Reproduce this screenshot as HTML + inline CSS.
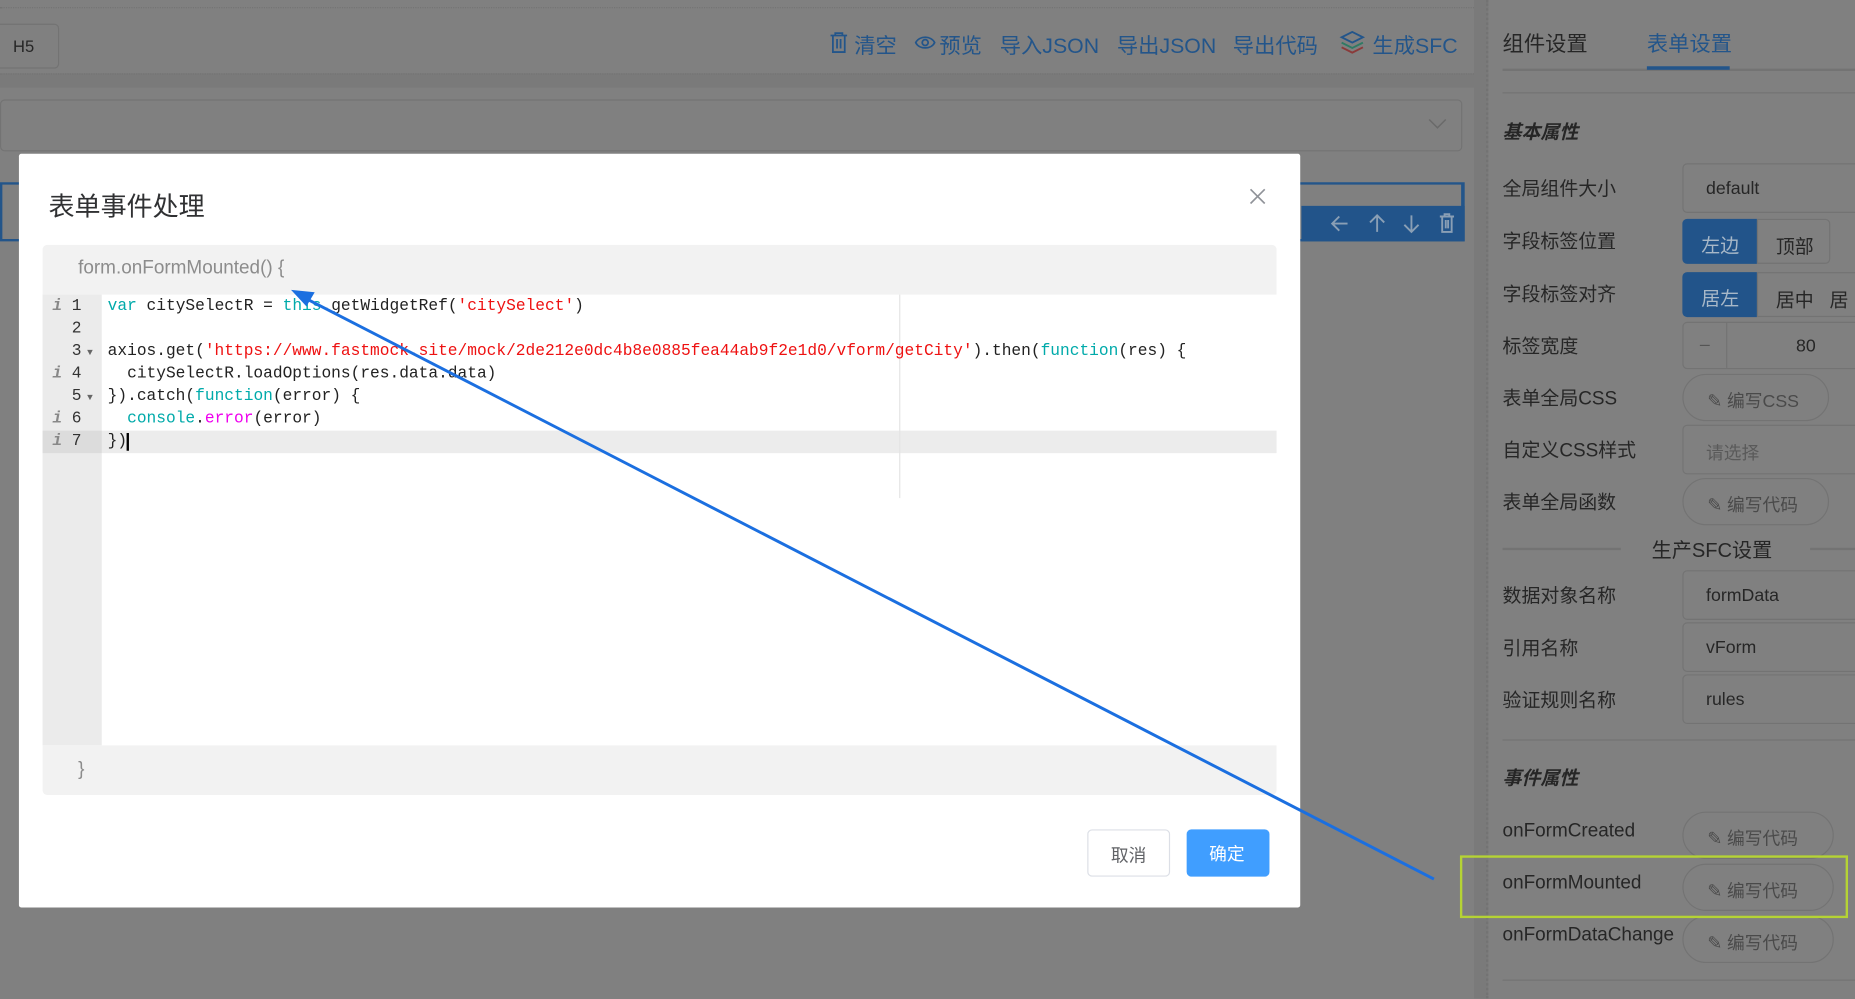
<!DOCTYPE html>
<html><head><meta charset="utf-8"><style>
*{box-sizing:border-box;margin:0;padding:0}
html,body{width:1855px;height:998px;overflow:hidden;background:#808080}
#w{position:absolute;left:0;top:0;width:1568px;height:844px;transform:scale(1.1831);transform-origin:0 0;font-family:"Liberation Sans","Noto Sans CJK SC",sans-serif;background:#808080;color:#262626}
.a{position:absolute}
.tb{position:absolute;color:#23558a;font-size:18px;top:25px;white-space:nowrap}
.lbl{position:absolute;left:1270px;font-size:16px;color:#262626}
.inp{position:absolute;left:1422px;width:160px;height:42px;border:1px solid #737373;border-radius:4px;background:#808080;color:#262626;font-size:15px;padding:12px 19px}
.btn{position:absolute;left:1422px;width:124px;height:40px;border:1px solid #737373;border-radius:20px;color:#4a4a4a;font-size:15px;padding:11px 0 0 20px;white-space:nowrap}
.code{position:absolute;left:91px;font-family:"Liberation Mono",monospace;font-size:13.7px;white-space:pre;color:#222}
.ln{position:absolute;left:36px;width:50px;font-family:"Liberation Mono",monospace;font-size:13.7px;color:#333}
.k{color:#0aa}.s{color:#e11}.m{color:#e0e}
</style></head><body><div id="w">
<div class="a" style="left:0;top:6px;width:1258px;border-top:1px dotted #737373"></div>
<div class="a" style="left:0;top:62px;width:1258px;height:12px;background:#7a7a7a;border-top:1px dotted #737373"></div>
<div class="a" style="left:-6px;top:20px;width:56px;height:38px;border:1px solid #737373;border-radius:4px;font-size:14px;padding:10px 0 0 16px;color:#262626">H5</div>
<svg class="a" style="left:701px;top:27px" width="16" height="18" viewBox="0 0 16 18" fill="none" stroke="#23558a" stroke-width="1.5"><path d="M1 3h14M5 3V1h6v2M3 3v14h10V3M6.5 6v8M9.5 6v8"/></svg>
<div class="tb" style="left:722px">清空</div>
<svg class="a" style="left:773px;top:29px" width="18" height="14" viewBox="0 0 18 14" fill="none" stroke="#23558a" stroke-width="1.5"><path d="M1 7C4 1 14 1 17 7C14 13 4 13 1 7Z"/><circle cx="9" cy="7" r="2.5"/></svg>
<div class="tb" style="left:794px">预览</div>
<div class="tb" style="left:845px">导入JSON</div>
<div class="tb" style="left:944px">导出JSON</div>
<div class="tb" style="left:1042px">导出代码</div>
<svg class="a" style="left:1132px;top:26px" width="22" height="20" viewBox="0 0 22 20" fill="none" stroke-width="1.6"><path d="M11 1L20 5.5L11 10L2 5.5Z" stroke="#23558a"/><path d="M2 10l9 4.5 9-4.5" stroke="#2f7a64"/><path d="M2 14l9 4.5 9-4.5" stroke="#8a3a3a"/></svg>
<div class="tb" style="left:1160px">生成SFC</div>
<div class="a" style="left:0;top:84px;width:1236px;height:44px;border:1px solid #737373;border-radius:4px"></div>
<svg class="a" style="left:1207px;top:100px" width="16" height="10" viewBox="0 0 16 10" fill="none" stroke="#6a6a6a" stroke-width="1.3"><path d="M1 1l7 7 7-7"/></svg>
<div class="a" style="left:0;top:154px;width:1238px;height:50px;border:2px solid #23558a;border-right-width:3px"></div>
<div class="a" style="left:1100px;top:174px;width:138px;height:30px;background:#22548a"></div>
<svg class="a" style="left:1120px;top:178px" width="120" height="22" viewBox="0 0 120 22" fill="none" stroke="#8a9fb5" stroke-width="1.6"><path d="M19 11H7M12 5l-6 6 6 6"/><path d="M44 18V4M38 10l6-6 6 6"/><path d="M73 4v14M67 12l6 6 6-6"/><path d="M97 5h12M101 5V3h4v2M99 5v13h8V5M102 8v7M104 8v7"/></svg>
<div class="a" style="left:1246px;top:0;width:12px;height:844px;background:#7a7a7a;border-right:2px dotted #737373"></div>
<div class="a" style="left:1270px;top:23px;font-size:18px">组件设置</div>
<div class="a" style="left:1392px;top:23px;font-size:18px;color:#23558a">表单设置</div>
<div class="a" style="left:1270px;top:58px;width:298px;height:2px;background:#737373"></div>
<div class="a" style="left:1392px;top:56px;width:70px;height:3px;background:#23558a"></div>
<div class="a" style="left:1270px;top:78px;width:298px;border-top:1px solid #737373"></div>
<div class="lbl" style="top:98px;font-weight:bold;font-style:italic">基本属性</div>
<div class="lbl" style="top:146px">全局组件大小</div><div class="inp" style="top:138px">default</div>
<div class="lbl" style="top:190px">字段标签位置</div>
<div class="a" style="left:1422px;top:185px;width:63px;height:38px;background:#22548a;border-radius:4px 0 0 4px;color:#a8b8c8;font-size:16px;padding:9px 0 0 16px">左边</div>
<div class="a" style="left:1485px;top:185px;width:62px;height:38px;border:1px solid #737373;border-radius:0 4px 4px 0;font-size:16px;padding:9px 0 0 15px">顶部</div>
<div class="lbl" style="top:235px">字段标签对齐</div>
<div class="a" style="left:1422px;top:230px;width:63px;height:38px;background:#22548a;border-radius:4px 0 0 4px;color:#a8b8c8;font-size:16px;padding:9px 0 0 16px">居左</div>
<div class="a" style="left:1485px;top:230px;width:90px;height:38px;border:1px solid #737373;font-size:16px;padding:9px 0 0 15px">居中 &nbsp;&nbsp;居</div>
<div class="lbl" style="top:279px">标签宽度</div>
<div class="a" style="left:1422px;top:272px;width:160px;height:40px;border:1px solid #737373;border-radius:4px;font-size:15px"><span style="position:absolute;left:0;top:0;width:37px;height:38px;border-right:1px solid #737373;text-align:center;padding-top:10px;color:#555">–</span><span style="position:absolute;left:95px;top:11px">80</span></div>
<div class="lbl" style="top:323px">表单全局CSS</div><div class="btn" style="top:316px">✎ 编写CSS</div>
<div class="lbl" style="top:367px">自定义CSS样式</div><div class="inp" style="top:359px;color:#5a5a5a">请选择</div>
<div class="lbl" style="top:411px">表单全局函数</div><div class="btn" style="top:404px">✎ 编写代码</div>
<div class="a" style="left:1270px;top:463px;width:100px;border-top:2px solid #737373"></div>
<div class="a" style="left:1530px;top:463px;width:40px;border-top:2px solid #737373"></div>
<div class="a" style="left:1396px;top:451px;font-size:17px">生产SFC设置</div>
<div class="lbl" style="top:490px">数据对象名称</div><div class="inp" style="top:482px">formData</div>
<div class="lbl" style="top:534px">引用名称</div><div class="inp" style="top:526px">vForm</div>
<div class="lbl" style="top:578px">验证规则名称</div><div class="inp" style="top:570px">rules</div>
<div class="a" style="left:1270px;top:625px;width:298px;border-top:1px solid #737373"></div>
<div class="lbl" style="top:644px;font-weight:bold;font-style:italic">事件属性</div>
<div class="lbl" style="top:694px">onFormCreated</div><div class="btn" style="top:686px;width:128px">✎ 编写代码</div>
<div class="lbl" style="top:738px">onFormMounted</div><div class="btn" style="top:730px;width:128px">✎ 编写代码</div>
<div class="lbl" style="top:782px">onFormDataChange</div><div class="btn" style="top:774px;width:128px">✎ 编写代码</div>
<div class="a" style="left:1270px;top:828px;width:298px;border-top:1px solid #737373"></div>
<div class="a" style="left:1234px;top:723px;width:328px;height:53px;border:2px solid #b5d334"></div>

<div class="a" style="left:16px;top:130px;width:1083px;height:637px;background:#fff;border-radius:2px">
<div class="a" style="left:25px;top:27px;font-size:22px;color:#303133">表单事件处理</div>
<svg class="a" style="left:1040px;top:29px" width="14" height="14" viewBox="0 0 14 14" stroke="#909399" stroke-width="1.4"><path d="M1 1l12 12M13 1L1 13"/></svg>
</div>
<div class="a" style="left:36px;top:207px;width:1043px;height:42px;background:#f2f2f2;border-radius:4px 4px 0 0;font-size:16px;color:#8c8c8c;padding:11px 0 0 30px">form.onFormMounted() {</div>
<div class="a" style="left:36px;top:249px;width:50px;height:381px;background:#ebebeb"></div>
<div class="a" style="left:36px;top:364px;width:1043px;height:19px;background:#ececec"></div>
<div class="a" style="left:36px;top:364px;width:50px;height:19px;background:#dcdcdc"></div>
<div class="a" style="left:760px;top:249px;height:172px;border-left:1px solid #e4e4e4"></div>
<div class="ln" style="top:252px">&nbsp;<i style="color:#888;font-weight:bold">i</i> 1</div>
<div class="ln" style="top:271px">&nbsp;&nbsp;&nbsp;2</div>
<div class="ln" style="top:290px">&nbsp;&nbsp;&nbsp;3<span style="font-size:8px;color:#666"> ▼</span></div>
<div class="ln" style="top:309px">&nbsp;<i style="color:#888;font-weight:bold">i</i> 4</div>
<div class="ln" style="top:328px">&nbsp;&nbsp;&nbsp;5<span style="font-size:8px;color:#666"> ▼</span></div>
<div class="ln" style="top:347px">&nbsp;<i style="color:#888;font-weight:bold">i</i> 6</div>
<div class="ln" style="top:366px">&nbsp;<i style="color:#888;font-weight:bold">i</i> 7</div>
<div class="code" style="top:252px"><span class="k">var</span> citySelectR = <span class="k">this</span>.getWidgetRef(<span class="s">'citySelect'</span>)</div>
<div class="code" style="top:290px">axios.get(<span class="s">'https://www.fastmock.site/mock/2de212e0dc4b8e0885fea44ab9f2e1d0/vform/getCity'</span>).then(<span class="k">function</span>(res) {</div>
<div class="code" style="top:309px">  citySelectR.loadOptions(res.data.data)</div>
<div class="code" style="top:328px">}).catch(<span class="k">function</span>(error) {</div>
<div class="code" style="top:347px">  <span class="k">console</span>.<span class="m">error</span>(error)</div>
<div class="code" style="top:366px">})<span style="border-left:2px solid #000"></span></div>
<div class="a" style="left:36px;top:630px;width:1043px;height:42px;background:#f2f2f2;border-radius:0 0 4px 4px;font-size:16px;color:#8c8c8c;padding:12px 0 0 30px">}</div>
<div class="a" style="left:919px;top:701px;width:70px;height:40px;border:1px solid #dcdfe6;border-radius:4px;font-size:15px;color:#606266;padding:10px 0 0 19px">取消</div>
<div class="a" style="left:1003px;top:701px;width:70px;height:40px;background:#409eff;border-radius:4px;font-size:15px;color:#fff;padding:10px 0 0 19px">确定</div>
<svg class="a" style="left:0;top:0" width="1568" height="844"><line x1="1212" y1="743" x2="258" y2="252" stroke="#1b6fe0" stroke-width="2.5"/><polygon points="246,245 266,247 259,259" fill="#1b6fe0"/></svg>
</div></body></html>
